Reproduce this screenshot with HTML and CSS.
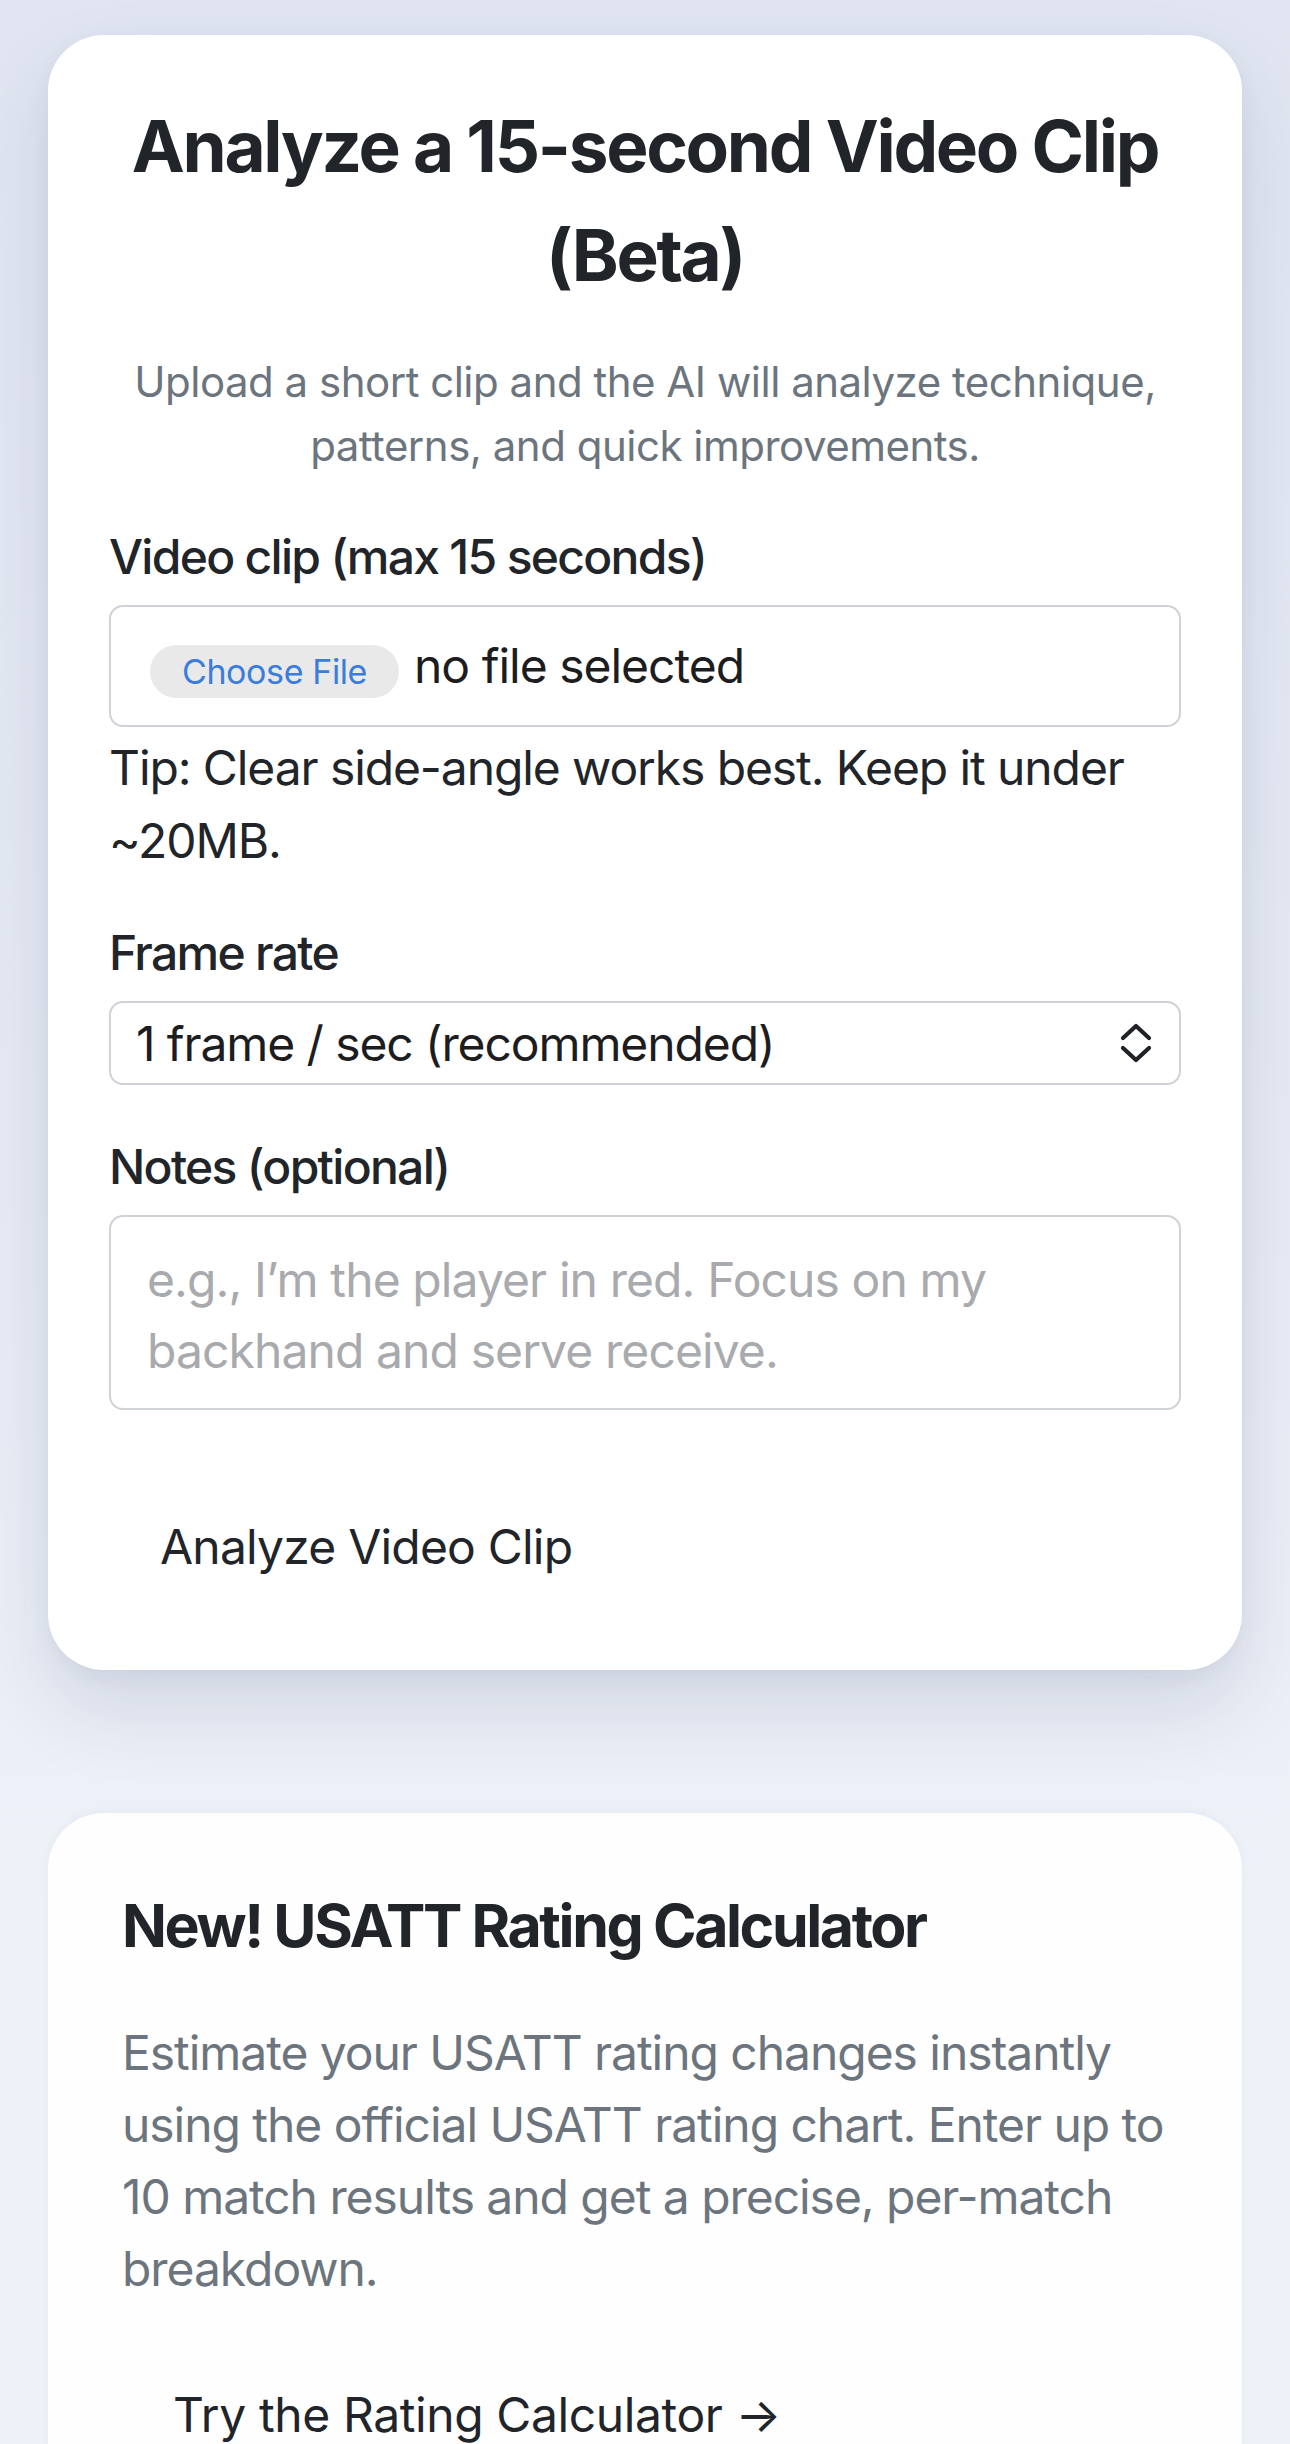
FILE: index.html
```html
<!DOCTYPE html>
<html lang="en">
<head>
<meta charset="utf-8">
<title>Analyze a 15-second Video Clip</title>
<link rel="stylesheet" href="styles.css">
</head>
<body>
<main class="page">
  <section class="card card-main">
    <h1 class="title">Analyze a 15-second Video Clip (Beta)</h1>
    <p class="subtitle">Upload a short clip and the AI will analyze technique, patterns, and quick improvements.</p>

    <div class="field">
      <label class="label">Video clip (max 15 seconds)</label>
      <div class="file-box">
        <span class="file-btn">Choose File</span>
        <span class="file-name">no file selected</span>
      </div>
      <p class="tip">Tip: Clear side-angle works best. Keep it under ~20MB.</p>
    </div>

    <div class="field field-gap">
      <label class="label">Frame rate</label>
      <div class="select-box">
        <span>1 frame / sec (recommended)</span>
        <svg class="chev" width="34" height="40" viewBox="0 0 34 40" aria-hidden="true">
          <path d="M4 15 L17 3 L30 15" fill="none" stroke="#1f2226" stroke-width="4.2" stroke-linecap="round" stroke-linejoin="round"/>
          <path d="M4 25 L17 37 L30 25" fill="none" stroke="#1f2226" stroke-width="4.2" stroke-linecap="round" stroke-linejoin="round"/>
        </svg>
      </div>
    </div>

    <div class="field field-gap field-notes">
      <label class="label">Notes (optional)</label>
      <div class="textarea-box"><span class="placeholder">e.g., I’m the player in red. Focus on my backhand and serve receive.</span></div>
    </div>

    <button class="btn btn-analyze" type="button">Analyze Video Clip</button>
  </section>

  <section class="card card-promo">
    <h2 class="promo-title">New! USATT Rating Calculator</h2>
    <p class="promo-text">Estimate your USATT rating changes instantly using the official USATT rating chart. Enter up to 10 match results and get a precise, per-match breakdown.</p>
    <button class="btn btn-promo" type="button">Try the Rating Calculator →</button>
  </section>
</main>
</body>
</html>
```
FILE: styles.css
```css
* { box-sizing: border-box; }

html, body {
  margin: 0;
  padding: 0;
}

body {
  font-family: Inter, "Noto Sans", "Liberation Sans", sans-serif;
  color: #212529;
  background: linear-gradient(180deg, #e0e5f1 0%, #e7ebf5 45%, #edf1f8 75%, #eef1f8 100%);
  min-height: 2444px;
  overflow: hidden;
}

.page {
  padding: 35px 48px 0;
  display: flex;
  flex-direction: column;
}

.card {
  background: #ffffff;
  border-radius: 56px;
}

.card-main {
  padding: 57px 61px 69px;
  box-shadow: 0 40px 80px rgba(40, 55, 90, 0.13), 0 6px 20px rgba(40, 55, 90, 0.05);
  display: flex;
  flex-direction: column;
}

.title {
  margin: 0 0 40px;
  font-size: 71px;
  font-weight: 700;
  line-height: 109px;
  text-align: center;
  letter-spacing: -2.3px;
  color: #212529;
}

.subtitle {
  margin: 0 0 43px;
  font-size: 42px;
  line-height: 64px;
  text-align: center;
  color: #6c757d;
  letter-spacing: -0.5px;
}

.field {
  display: flex;
  flex-direction: column;
}

.field-gap {
  margin-top: 40px;
}

.field-notes {
  margin-top: 46px;
}

.label {
  font-size: 48px;
  font-weight: 500;
  line-height: 72px;
  margin-bottom: 12px;
  letter-spacing: -1.7px;
}

.file-box {
  height: 122px;
  border: 2px solid #cfd2d6;
  border-radius: 14px;
  display: flex;
  align-items: center;
  padding-left: 39px;
  gap: 15px;
}

.file-btn {
  display: inline-flex;
  align-items: center;
  justify-content: center;
  height: 53px;
  width: 249px;
  margin-top: 10px;
  border-radius: 27px;
  background: #e9e9ea;
  color: #3a7ddb;
  font-size: 34px;
  letter-spacing: -0.4px;
}

.file-name {
  font-size: 48px;
  line-height: 72px;
  letter-spacing: -1px;
  color: #1d1d1f;
}

.tip {
  margin: 4px 0 0;
  font-size: 48px;
  line-height: 73px;
  letter-spacing: -1.1px;
}

.select-box {
  height: 84px;
  border: 2px solid #cfd2d6;
  border-radius: 14px;
  display: flex;
  align-items: center;
  justify-content: space-between;
  padding: 0 26px 0 25px;
  font-size: 48px;
  letter-spacing: -1.1px;
  color: #1d1d1f;
}

.chev {
  display: block;
  width: 34px;
  height: 40px;
}

.textarea-box {
  height: 195px;
  border: 2px solid #cfd2d6;
  border-radius: 14px;
  padding: 27px 36px;
  font-size: 48px;
  line-height: 71px;
  letter-spacing: -0.9px;
}

.placeholder {
  color: #a8aaad;
}

.btn {
  align-self: flex-start;
  background: transparent;
  border: none;
  font-family: inherit;
  font-size: 48px;
  line-height: 72px;
  color: #212529;
  cursor: pointer;
}

.btn-analyze {
  margin-top: 83px;
  padding: 18px 51px;
  letter-spacing: -0.8px;
}

.card-promo {
  margin-top: 143px;
  padding: 77px 72px 80px 74px;
  background: #fefefe;
  box-shadow: 0 -2px 10px rgba(40, 55, 90, 0.03);
  display: flex;
  flex-direction: column;
}

.promo-title {
  margin: 0;
  font-size: 59px;
  font-weight: 700;
  line-height: 72px;
  letter-spacing: -2.4px;
}

.promo-text {
  margin: 55px 0 0;
  font-size: 48px;
  line-height: 72px;
  color: #6c757d;
  letter-spacing: -1.05px;
}

.btn-promo {
  margin-top: 56px;
  padding: 18px 51px;
  letter-spacing: -0.4px;
}
```
